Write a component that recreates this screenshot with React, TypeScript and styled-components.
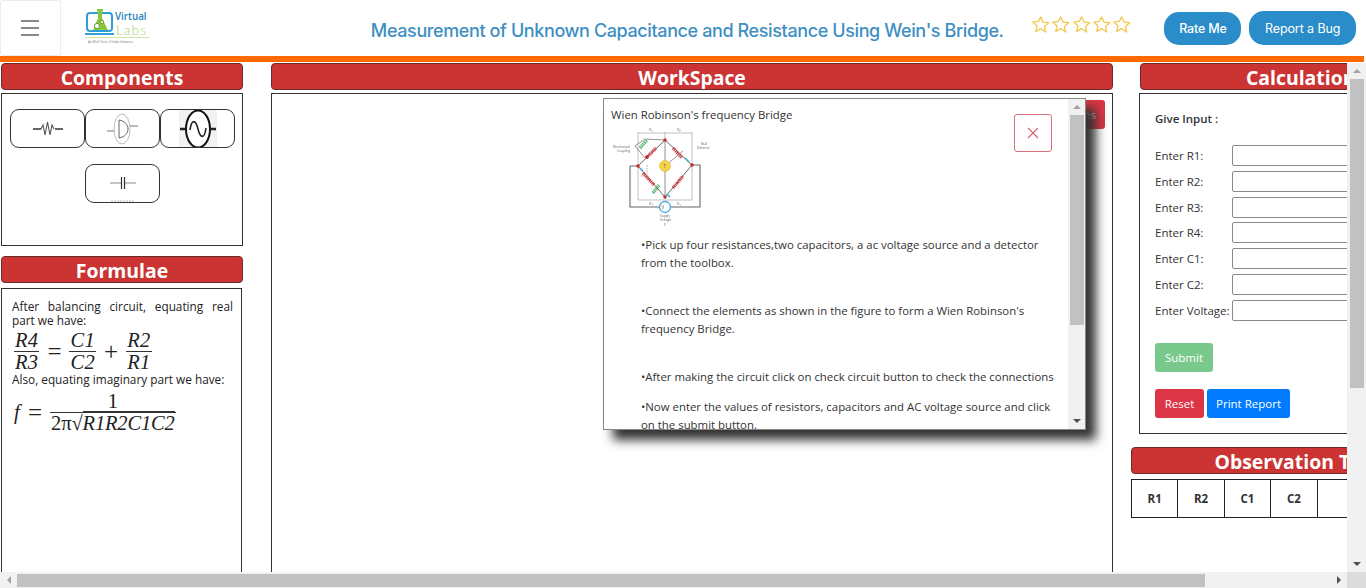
import React from 'react';
import styled, { createGlobalStyle } from 'styled-components';

const Global = createGlobalStyle`
  html, body { margin: 0; padding: 0; height: 100%; overflow: hidden; background: #fff; }
  body { font-family: "Open Sans", "Noto Sans", sans-serif; color: #212529; }
  * { box-sizing: border-box; }
`;

const Page = styled.div`
  width: 1366px;
  height: 588px;
  display: flex;
  flex-direction: column;
  overflow: hidden;
`;

const Header = styled.header`
  height: 62px;
  flex: none;
  margin-right: 2px;
  display: flex;
  align-items: flex-start;
  border-bottom: 6px solid #ff6a00;
`;

const MenuButton = styled.button`
  width: 61px;
  height: 56px;
  padding: 0;
  background: #fff;
  border: 1px solid #ececec;
  border-radius: 3px;
  display: flex;
  flex-direction: column;
  align-items: center;
  justify-content: center;
  gap: 5px;
`;

const MenuLine = styled.span`
  width: 18px;
  height: 2px;
  background: #8a8a8a;
`;

const LogoWrap = styled.div`
  width: 66px;
  margin: 9px 0 0 24px;
`;

const Title = styled.h1`
  margin: 19px 0 0 220px;
  width: 632px;
  font: 500 18px/24px "Inter", sans-serif;
  letter-spacing: -0.39px;
  color: #3d8fc4;
  white-space: nowrap;
`;

const Stars = styled.div`
  display: flex;
  gap: 1px;
  margin: 15px 0 0 28px;
  width: 134px;
`;

const HeadButton = styled.button<{ $w: number; $top: number; $strong?: boolean }>`
  width: ${p => p.$w}px;
  height: ${p => 45 - p.$top}px;
  margin-top: ${p => p.$top}px;
  margin-right: 8px;
  padding: 0;
  border: none;
  border-radius: 15px;
  background: #2a8cc8;
  color: #fff;
  font: ${p => (p.$strong ? 500 : 400)} 12.5px "Inter", sans-serif;
  letter-spacing: ${p => (p.$strong ? -0.2 : -0.1)}px;
`;

const Middle = styled.div`
  flex: 1;
  min-height: 0;
  display: flex;
`;

const Viewport = styled.main`
  width: 1347px;
  overflow: hidden;
  display: flex;
  gap: 28px;
  padding: 1px 0 0 1px;
`;

const LeftColumn = styled.section`
  width: 242px;
  flex: none;
  display: flex;
  flex-direction: column;
`;

const WorkColumn = styled.section`
  width: 842px;
  flex: none;
  display: flex;
  flex-direction: column;
  margin-right: -10px;
`;

const RightColumn = styled.section`
  width: 344px;
  flex: none;
  display: flex;
  flex-direction: column;
`;

const Banner = styled.h2`
  margin: 0;
  height: 27px;
  flex: none;
  background: #cc3333;
  border: 1px solid #6b2a2a;
  border-radius: 4px;
  color: #fff;
  font: 700 19.4px/28px "Open Sans", sans-serif;
  text-align: center;
  white-space: nowrap;
  overflow: hidden;
`;

const CalcHead = styled(Banner)`
  margin: 0 4px 0 9px;
`;

const ComponentsBox = styled.div`
  height: 153px;
  margin-top: 3px;
  border: 1px solid #333;
  padding: 15px 7px 0 8px;
  display: flex;
  flex-wrap: wrap;
  justify-content: center;
  align-content: flex-start;
  row-gap: 16px;
`;

const Part = styled.button`
  width: 75px;
  height: 39px;
  padding: 0;
  background: #fff;
  border: 1px solid #333;
  border-radius: 9px;
  display: flex;
  align-items: center;
  justify-content: center;
  overflow: hidden;
`;

const FormulaHead = styled(Banner)`
  margin-top: 10px;
`;

const FormulaBox = styled.div`
  flex: 1;
  margin: 5px 1px -10px 0;
  border: 1px solid #333;
  padding: 10px 8px 0 10px;
  font-size: 11.8px;
  line-height: 14px;
  color: #222;
`;

const Justified = styled.p`
  margin: 0;
  text-align: justify;
`;

const Plain = styled.p`
  margin: -1px 0 0;
`;

const MathRow = styled.div<{ $top: number }>`
  display: flex;
  align-items: center;
  gap: 8px;
  margin: ${p => p.$top}px 0 0 2px;
  font: italic 20.5px/21px "Liberation Serif", "DejaVu Serif", serif;
  letter-spacing: 0.3px;
  color: #222;
`;

const Frac = styled.span`
  min-width: 25px;
  display: inline-flex;
  flex-direction: column;
  align-items: center;
`;

const Num = styled.span`
  padding: 0 1px;
`;

const Den = styled.span`
  border-top: 1px solid #333;
  padding: 0 1px;
  align-self: stretch;
  text-align: center;
`;

const RootDen = styled(Den)`
  letter-spacing: -0.15px;
`;

const Upright = styled.span`
  font-style: normal;
`;

const Operator = styled.span`
  font-style: normal;
  font-size: 25px;
  letter-spacing: 0;
`;

const Radicand = styled.span`
  border-top: 1px solid #333;
`;

const WorkBox = styled.div`
  flex: 1;
  margin: 3px 0 -10px;
  border: 1px solid #333;
  padding: 6px 7px 0 0;
  display: flex;
  justify-content: flex-end;
  align-items: flex-start;
`;

const CheckButton = styled.button`
  height: 29px;
  padding: 0 9px;
  border: none;
  border-radius: 3px;
  background: #dc3545;
  color: #fff;
  font: 11.5px "Open Sans", sans-serif;
`;

const CalcBox = styled.div`
  margin: 3px 0 0 8px;
  height: 341px;
  border: 1px solid #333;
  border-right: none;
  padding: 16px 0 0 15px;
  font-size: 11.5px;
  color: #333;
`;

const GiveInput = styled.div`
  font-weight: 600;
  line-height: 17px;
  margin-bottom: 18px;
`;

const FormRow = styled.label`
  display: flex;
  align-items: center;
  height: 21px;
  margin-bottom: 4.75px;
`;

const FormLabel = styled.span`
  width: 77px;
  flex: none;
  white-space: nowrap;
`;

const FormInput = styled.input`
  width: 170px;
  height: 21px;
  flex: none;
  border: 1px solid #8a8a8a;
  border-radius: 2px;
  background: #fff;
`;

const ButtonRow = styled.div<{ $top: number }>`
  display: flex;
  gap: 3px;
  margin-top: ${p => p.$top}px;
`;

const FormButton = styled.button<{ $bg: string; $w: number }>`
  width: ${p => p.$w}px;
  height: 29px;
  padding: 0;
  border: none;
  border-radius: 3px;
  background: ${p => p.$bg};
  color: #fff;
  font: 11.5px "Open Sans", sans-serif;
`;

const ObsHead = styled(Banner)`
  margin-top: 13px;
`;

const ObsTable = styled.table`
  margin-top: 5px;
  border-collapse: collapse;
  table-layout: fixed;
  width: 233px;
  font-size: 11.5px;
  color: #333;
`;

const ObsCell = styled.th`
  height: 38px;
  padding: 0;
  border: 1px solid #222;
  font-weight: 700;
`;

const Track = styled.div`
  background: #f1f1f1;
  flex: none;
  display: flex;
`;

const VTrack = styled(Track)`
  width: 19px;
  margin-top: 1px;
  flex-direction: column;
  align-items: center;
`;

const HTrack = styled(Track)`
  height: 16px;
  align-items: center;
`;

const Arrow = styled.span<{ $dir: 'up' | 'down' | 'left' | 'right' }>`
  width: 0;
  height: 0;
  flex: none;
  border-style: solid;
  border-color: transparent;
  ${p =>
    p.$dir === 'up'
      ? 'border-width: 0 4px 4px; border-bottom-color: #a3a3a3;'
      : p.$dir === 'down'
        ? 'border-width: 4px 4px 0; border-top-color: #505050;'
        : p.$dir === 'left'
          ? 'border-width: 4px 4px 4px 0; border-right-color: #a3a3a3;'
          : 'border-width: 4px 0 4px 4px; border-left-color: #505050;'}
`;

const VEnd = styled.div`
  height: 16px;
  width: 100%;
  flex: none;
  display: flex;
  align-items: center;
  justify-content: center;
`;

const VThumb = styled.div<{ $h: number }>`
  width: 14px;
  height: ${p => p.$h}px;
  background: #c1c1c1;
  flex: none;
`;

const VGap = styled.div`
  flex: 1;
`;

const HEnd = styled.div`
  width: 17px;
  height: 16px;
  flex: none;
  display: flex;
  align-items: center;
  justify-content: center;
`;

const HThumb = styled.div`
  width: 1188px;
  height: 13px;
  background: #c1c1c1;
  flex: none;
`;

const Corner = styled.div`
  width: 19px;
  height: 16px;
  flex: none;
  background: #dcdcdc;
`;

const Modal = styled.div`
  position: absolute;
  left: 603px;
  top: 98px;
  width: 483px;
  height: 332px;
  background: #fff;
  border: 1px solid #888;
  box-shadow: 10px 10px 10px #333;
  display: flex;
`;

const ModalBody = styled.div`
  position: relative;
  flex: 1;
  overflow: hidden;
  padding: 7px 0 0 7px;
  font-size: 11.4px;
  line-height: 18px;
  color: #333;
`;

const ModalTitle = styled.div`
  color: #333;
`;

const CloseButton = styled.button`
  position: absolute;
  left: 410px;
  top: 15px;
  width: 38px;
  height: 38px;
  padding: 0;
  background: #fff;
  border: 1px solid #d9707e;
  border-radius: 3px;
  display: flex;
  align-items: center;
  justify-content: center;
`;

const Diagram = styled.div`
  width: 110px;
  height: 111px;
  margin-bottom: 1px;
  filter: blur(0.3px);
`;

const Step = styled.p<{ $after: number }>`
  margin: 0 10px ${p => p.$after}px 30px;
`;

const ModalTrack = styled(VTrack)`
  width: 17px;
  margin-top: 0;
`;

function Star() {
  return (
    <svg width="19.400" height="19.400" viewBox="0 0 24 24" fill="none" stroke="#f2c94c" strokeWidth="1.600" strokeLinejoin="round">
      <path d="M12 2.500l2.900 6.300 6.900.8-5.100 4.700 1.400 6.800L12 16.800l-6.100 3.400 1.400-6.800-5.100-4.700 6.900-.8z" />
    </svg>
  );
}

function Logo() {
  return (
    <svg width="66" height="38" viewBox="0 0 66 38">
      <rect x="2" y="4" width="25" height="18" rx="3" fill="#fff" stroke="#2f9fd8" strokeWidth="2" />
      <path d="M12 0h6v2l-1 1v6l6 12H8l5-12V3l-1-1z" fill="#8cc63f" />
      <circle cx="12" cy="17" r="2.600" fill="#fff" stroke="#6a9c2f" />
      <circle cx="17" cy="13" r="1.600" fill="#fff" stroke="#6a9c2f" />
      <rect x="0" y="24" width="29" height="2" fill="#2f9fd8" />
      <text x="30" y="10.500" fontFamily="Open Sans, sans-serif" fontSize="9.800" fontWeight="600" fill="#2b7fb8">Virtual</text>
      <text x="31" y="26" fontFamily="Lato, sans-serif" fontSize="13" fontWeight="300" letterSpacing="1.500" fill="#a6d26a">Labs</text>
      <rect x="0" y="28" width="64" height="1" fill="#cfe3a8" />
      <text x="3" y="34" fontFamily="Open Sans, sans-serif" fontSize="3.200" fill="#777">An MoE Govt of India Initiative</text>
    </svg>
  );
}

function Resistor() {
  return (
    <svg width="32" height="18" viewBox="0 0 32 18" fill="none">
      <path d="M1 9h8" stroke="#666" strokeWidth="2" />
      <path d="M23 9h8" stroke="#666" strokeWidth="2" />
      <path d="M9 9l2-4 2 10 2.500-13 2.500 13 2-10 2 4" stroke="#555" strokeWidth="1.100" />
    </svg>
  );
}

function Detector() {
  return (
    <svg width="34" height="36" viewBox="0 0 34 36" fill="none">
      <ellipse cx="16" cy="18" rx="8" ry="15" stroke="#bbb" strokeWidth="1" />
      <path d="M13 9v18c6-1 9-5 9-9s-3-8-9-9z" fill="#fff" stroke="#666" strokeWidth="1" />
      <path d="M1 20h7M24 15h8" stroke="#777" strokeWidth="1" />
    </svg>
  );
}

function AcSource() {
  return (
    <svg width="38" height="38" viewBox="0 0 38 38" fill="none">
      <rect width="38" height="38" fill="#f2f2f2" />
      <ellipse cx="19" cy="19" rx="12" ry="18.500" fill="#fff" stroke="#111" strokeWidth="2" />
      <path d="M1 19h6M31 19h6" stroke="#222" strokeWidth="2.400" />
      <path d="M11 20c1.500-11 5.500-11 8-1s6.500 10 8-1" stroke="#222" strokeWidth="1.600" />
    </svg>
  );
}

function Capacitor() {
  return (
    <svg width="32" height="37" viewBox="0 0 32 37" fill="none">
      <path d="M3 18h11M18 18h11" stroke="#888" strokeWidth="1" />
      <path d="M14.500 12v12M17.500 12v12" stroke="#333" strokeWidth="1.200" />
      <path d="M4 36h24" stroke="#bbb" strokeWidth="1" strokeDasharray="2 1" />
    </svg>
  );
}

function BridgeDiagram() {
  const zig = (x1: number, y1: number, x2: number, y2: number) => (
    <line x1={x1} y1={y1} x2={x2} y2={y2} stroke="#d0343a" strokeWidth="3.200" strokeDasharray="1.200 0.700" />
  );
  const node = (cx: number, cy: number) => <circle cx={cx} cy={cy} r="1.700" fill="#c62828" />;
  return (
    <svg width="110" height="111" viewBox="0 0 110 111" fill="none" fontFamily="Open Sans, sans-serif">
      <path d="M27 8V42M54 8V16M81 8V41M27 9H81" stroke="#999" strokeWidth="0.600" />
      <path d="M27 42V76H81V41" stroke="#999" strokeWidth="0.600" />
      <path d="M54 16L27 42L54 73L81 41Z" stroke="#666" strokeWidth="1" />
      <path d="M54 16V73M54 42L72 27" stroke="#777" strokeWidth="0.800" />
      <path d="M19 42H27M19 42V83H49M81 41H89V83H59" stroke="#666" strokeWidth="1.100" />
      <path d="M34 34L24 22L34 15L54 16" stroke="#666" strokeWidth="0.700" />
      <path d="M30 52H36V40" stroke="#888" strokeWidth="0.600" strokeDasharray="1.500 1" />
      {zig(62, 24, 71, 34)}
      {zig(62, 64, 72, 52)}
      {zig(32, 49, 43, 61)}
      {zig(35, 34, 45, 24)}
      <line x1="29" y1="24" x2="36" y2="16" stroke="#5cb87a" strokeWidth="3.500" strokeDasharray="1.500 0.700" />
      <line x1="42" y1="69" x2="48" y2="61" stroke="#5cb87a" strokeWidth="3.500" strokeDasharray="1.500 0.700" />
      <line x1="29" y1="44" x2="32" y2="47" stroke="#4aa8d8" strokeWidth="1.600" />
      <line x1="74" y1="34" x2="78" y2="38" stroke="#4aa8d8" strokeWidth="1.600" />
      <line x1="56" y1="70" x2="59" y2="73" stroke="#4aa8d8" strokeWidth="1.600" />
      <circle cx="54" cy="42" r="5.500" fill="#f5d547" stroke="#c9a92c" strokeWidth="0.500" />
      <text x="52.500" y="44" fontSize="5" fill="#555">T</text>
      {node(54, 16)}
      {node(27, 42)}
      {node(81, 41)}
      {node(54, 73)}
      {node(36, 33)}
      <circle cx="54" cy="83" r="5.500" fill="#fff" stroke="#4aa8d8" strokeWidth="1.300" />
      <text x="50.500" y="85" fontSize="4.500" fill="#555">V</text>
      <text x="2" y="24" fontSize="3.200" fill="#666">Mechanical</text>
      <text x="6" y="28" fontSize="3.200" fill="#666">Coupling</text>
      <text x="90" y="21" fontSize="3.200" fill="#666">Null</text>
      <text x="86" y="25" fontSize="3.200" fill="#666">Detector</text>
      <text x="49" y="93" fontSize="3.200" fill="#666">Supply</text>
      <text x="49" y="97" fontSize="3.200" fill="#666">Voltage</text>
      <text x="53" y="102" fontSize="3.200" fill="#666">E</text>
      <text x="38" y="7" fontSize="3.800" fill="#555">V₁</text>
      <text x="66" y="7" fontSize="3.800" fill="#555">V₂</text>
      <text x="38" y="81" fontSize="3.800" fill="#555">V₃</text>
      <text x="66" y="81" fontSize="3.800" fill="#555">V₄</text>
    </svg>
  );
}

const formLabels = ['Enter R1:', 'Enter R2:', 'Enter R3:', 'Enter R4:', 'Enter C1:', 'Enter C2:', 'Enter Voltage:'];
const columns = ['R1', 'R2', 'C1', 'C2', ''];

export default function App() {
  return (
    <Page>
      <Global />
      <Header>
        <MenuButton aria-label="menu">
          <MenuLine />
          <MenuLine />
          <MenuLine />
        </MenuButton>
        <LogoWrap>
          <Logo />
        </LogoWrap>
        <Title>Measurement of Unknown Capacitance and Resistance Using Wein's Bridge.</Title>
        <Stars>
          <Star />
          <Star />
          <Star />
          <Star />
          <Star />
        </Stars>
        <HeadButton $w={77} $top={12} $strong>Rate Me</HeadButton>
        <HeadButton $w={107} $top={11}>Report a Bug</HeadButton>
      </Header>
      <Middle>
        <Viewport>
          <LeftColumn>
            <Banner>Components</Banner>
            <ComponentsBox>
              <Part><Resistor /></Part>
              <Part><Detector /></Part>
              <Part><AcSource /></Part>
              <Part><Capacitor /></Part>
            </ComponentsBox>
            <FormulaHead>Formulae</FormulaHead>
            <FormulaBox>
              <Justified>After balancing circuit, equating real part we have:</Justified>
              <MathRow $top={3}>
                <Frac><Num>R4</Num><Den>R3</Den></Frac>
                <Operator>=</Operator>
                <Frac><Num>C1</Num><Den>C2</Den></Frac>
                <Operator>+</Operator>
                <Frac><Num>R2</Num><Den>R1</Den></Frac>
              </MathRow>
              <Plain>Also, equating imaginary part we have:</Plain>
              <MathRow $top={5}>
                <span>f</span>
                <Operator>=</Operator>
                <Frac>
                  <Num><Upright>1</Upright></Num>
                  <RootDen>
                    <Upright>2π√</Upright>
                    <Radicand>R1R2C1C2</Radicand>
                  </RootDen>
                </Frac>
              </MathRow>
            </FormulaBox>
          </LeftColumn>
          <WorkColumn>
            <Banner>WorkSpace</Banner>
            <WorkBox>
              <CheckButton>Check Connections</CheckButton>
            </WorkBox>
          </WorkColumn>
          <RightColumn>
            <CalcHead>Calculations</CalcHead>
            <CalcBox>
              <GiveInput>Give Input :</GiveInput>
              {formLabels.map(label => (
                <FormRow key={label}>
                  <FormLabel>{label}</FormLabel>
                  <FormInput />
                </FormRow>
              ))}
              <ButtonRow $top={22}>
                <FormButton $bg="#7ac98c" $w={58}>Submit</FormButton>
              </ButtonRow>
              <ButtonRow $top={17}>
                <FormButton $bg="#dc3545" $w={49}>Reset</FormButton>
                <FormButton $bg="#007bff" $w={83}>Print Report</FormButton>
              </ButtonRow>
            </CalcBox>
            <ObsHead>Observation Table</ObsHead>
            <ObsTable>
              <thead>
                <tr>
                  {columns.map((c, i) => (
                    <ObsCell key={i}>{c}</ObsCell>
                  ))}
                </tr>
              </thead>
            </ObsTable>
          </RightColumn>
        </Viewport>
        <VTrack>
          <VEnd><Arrow $dir="up" /></VEnd>
          <VThumb $h={309} />
          <VGap />
          <VEnd><Arrow $dir="down" /></VEnd>
        </VTrack>
      </Middle>
      <HTrack>
        <HEnd><Arrow $dir="left" /></HEnd>
        <HThumb />
        <VGap />
        <HEnd><Arrow $dir="right" /></HEnd>
        <Corner />
      </HTrack>
      <Modal>
        <ModalBody>
          <ModalTitle>Wien Robinson's frequency Bridge</ModalTitle>
          <CloseButton aria-label="close">
            <svg width="12" height="12" viewBox="0 0 12 12" stroke="#d9606e" strokeWidth="1.100">
              <path d="M1 1l10 10M11 1L1 11" />
            </svg>
          </CloseButton>
          <Diagram>
            <BridgeDiagram />
          </Diagram>
          <Step $after={30}>•Pick up four resistances,two capacitors, a ac voltage source and a detector from the toolbox.</Step>
          <Step $after={30}>•Connect the elements as shown in the figure to form a Wien Robinson's frequency Bridge.</Step>
          <Step $after={12}>•After making the circuit click on check circuit button to check the connections</Step>
          <Step $after={0}>•Now enter the values of resistors, capacitors and AC voltage source and click on the submit button.</Step>
        </ModalBody>
        <ModalTrack>
          <VEnd><Arrow $dir="up" /></VEnd>
          <VThumb $h={210} />
          <VGap />
          <VEnd><Arrow $dir="down" /></VEnd>
        </ModalTrack>
      </Modal>
    </Page>
  );
}
